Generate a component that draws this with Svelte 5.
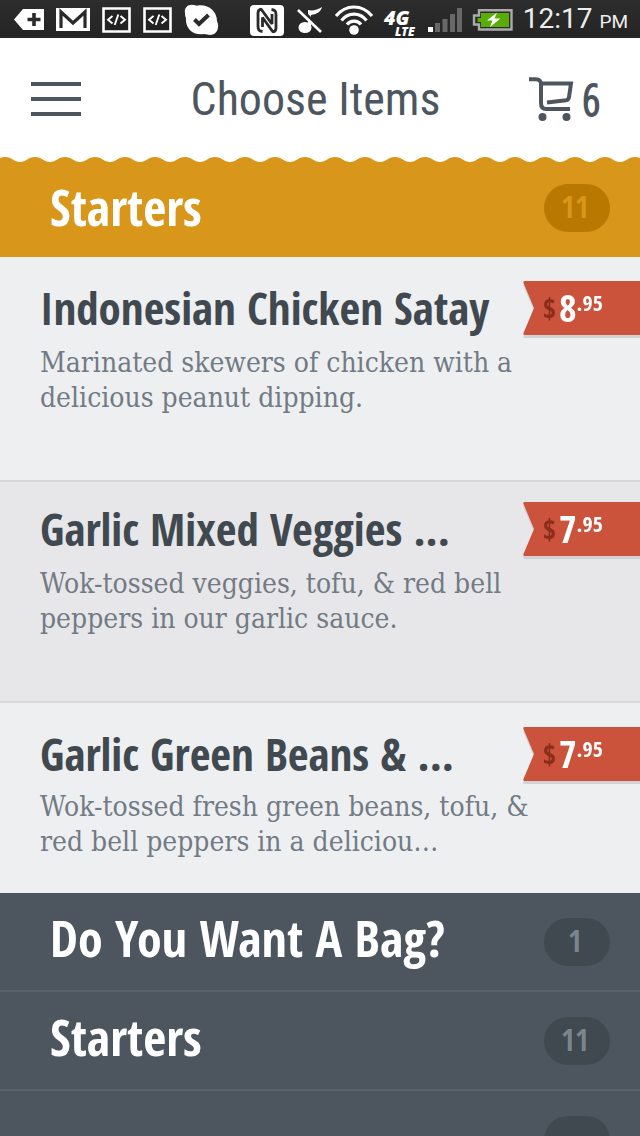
<script>
  const items = [
    { name: 'Indonesian Chicken Satay', text: 'Marinated skewers of chicken with a delicious peanut dipping.', whole: 8, cents: 95 },
    { name: 'Garlic Mixed Veggies ...', text: 'Wok-tossed veggies, tofu, & red bell peppers in our garlic sauce.', whole: 7, cents: 95 },
    { name: 'Garlic Green Beans & ...', text: 'Wok-tossed fresh green beans, tofu, & red bell peppers in a deliciou…', whole: 7, cents: 95 }
  ];
  const sections = [
    { name: 'Do You Want A Bag?', count: 1 },
    { name: 'Starters', count: 11 },
    { name: '', count: '' }
  ];
</script>

<div class="screen">
  <div class="status">
    <div class="group">
      <svg width="30" height="22" viewBox="0 0 30 22"><path d="M9 0H30V21H9L0 10.500Z" fill="#fff"/><path d="M20 4V17M13.500 10.500H26.500" stroke="#2b2b2b" stroke-width="3.600"/></svg>
      <svg width="34" height="24" viewBox="0 0 34 24"><path d="M0 0H34V23H0Z" fill="#fff"/><path d="M5 20V4L17 15L29 4V20" fill="none" stroke="#2b2b2b" stroke-width="3.200"/></svg>
      {#each [0, 1] as n (n)}
        <svg class="code" width="29" height="26" viewBox="0 0 29 26"><path d="M1.500 1.500H27.500V24.500H1.500Z" fill="#222" stroke="#fff" stroke-width="2.600"/><path d="M10.500 9L6 12.800L10.500 16.500M18.500 9L23 12.800L18.500 16.500M16.300 7.500L12.700 18" fill="none" stroke="#fff" stroke-width="1.900"/></svg>
      {/each}
      <svg width="35" height="32" viewBox="0 0 35 32"><path d="M1 9C0 4 4 0 9 1C11 1 12 2 14 1.500C24 0 33 7 33 17C36 23 33 31 26 31C24 31 22 30 20 30C9 32 1 24 2 14C1 12 1 11 1 9Z" fill="#fff"/><path d="M10.500 15.500L15 20L24.500 11" fill="none" stroke="#2b2b2b" stroke-width="4"/></svg>
    </div>
    <div class="group right">
      <svg width="34" height="31" viewBox="0 0 34 31"><rect width="34" height="31" rx="4" fill="#fff"/><path d="M12.500 26.500C9 26 8 25 8 21V8C8 6 9 4.500 11 4L22 19V9M21.500 4.500C25 5 26 6 26 10V23C26 25 25 26.500 23 27L12.500 12.500V22" fill="none" stroke="#2b2b2b" stroke-width="2.800" stroke-linejoin="bevel"/></svg>
      <svg width="30" height="28" viewBox="-3 0 30 28"><ellipse cx="8" cy="21.500" rx="6.500" ry="5.500" fill="#fff"/><path d="M11 4C16 5 20 4 25 1C24 5 21 8 14 9V21H11Z" fill="#fff"/><path d="M3 2L26 25" stroke="#2b2b2b" stroke-width="3"/><path d="M1 4L24 26" stroke="#fff" stroke-width="2.600"/></svg>
      <svg width="40" height="30" viewBox="0 0 40 30"><circle cx="20" cy="25" r="4.800" fill="#fff"/><path d="M2 11C12 -1 28 -1 38 11M7.500 15.500C14 7 26 7 32.500 15.500M13 19.500C16.500 15 23.500 15 27 19.500" fill="none" stroke="#fff" stroke-width="3.200"/></svg>
      <svg class="lte" width="34" height="34" viewBox="0 0 34 34" fill="#fff"><text x="0" y="22" font-size="20">4G</text><text x="11" y="33" font-size="12">LTE</text></svg>
      <svg width="34" height="24" viewBox="0 0 34 24" fill="#686868"><path d="M0 19H5V24H0Z" fill="#fff"/><path d="M7 15H12V24H7ZM14.500 11H19.500V24H14.500ZM22 6H27V24H22ZM29 0H34V24H29Z"/></svg>
      <svg width="41" height="22" viewBox="0 0 41 22"><path d="M7 1.200H39.500V20.500H7V15.500H2V6.500H7Z" fill="#2b2b2b" stroke="#aaa" stroke-width="2.400"/><path d="M9 4H37V18H9V13H5.500V9H9Z" fill="#58ad09"/><path d="M25 3.500L15 11.500H20.500L18 18L28.500 9.500H22.500Z" fill="#fff"/></svg>
      <span class="clock">12:17 <small>PM</small></span>
    </div>
  </div>

  <header>
    <button class="menu" aria-label="Menu"><span></span><span></span><span></span></button>
    <h1>Choose Items</h1>
    <button class="cart" aria-label="Cart, 6 items">
      <svg width="46" height="45" viewBox="0 0 46 45"><path d="M0 2.200H7C10 2.200 12 4 12 7V26C12 30 14 32 17 32H41M12 6.500H42L40 20C39.700 22 39 23 37 23.300L18 25.500" fill="none" stroke="#4d565f" stroke-width="4"/><circle cx="13.500" cy="40" r="4" fill="#4d565f"/><circle cx="37.500" cy="40" r="4" fill="#4d565f"/></svg>
      <span>6</span>
    </button>
  </header>

  <main>
    <section>
      <button class="bar open">
        <svg class="wave" width="100%" height="6">
          <defs>
            <pattern id="scallop" x="5" width="30" height="6" patternUnits="userSpaceOnUse">
              <path d="M0 0C7 0 9 5 15 5S23 0 30 0V6H0Z" fill="#d8971a"/>
            </pattern>
          </defs>
          <rect width="100%" height="6" fill="url(#scallop)"/>
        </svg>
        <span class="name">Starters</span><span class="pill">11</span>
      </button>
      <ul>
        {#each items as item (item.name)}
          <li>
            <h2>{item.name}</h2>
            <div class="tag">
              <svg width="12" height="54" viewBox="0 0 12 54"><path d="M12 0H2C0.500 0 0 1 0.500 2L11 27L0.500 52C0 53 0.500 54 2 54H12Z" fill="#cb533b"/></svg>
              <div class="price"><span class="cur">$</span><span class="whole">{item.whole}</span><span class="cents">.{item.cents}</span></div>
            </div>
            <p>{item.text}</p>
          </li>
        {/each}
      </ul>
    </section>
    {#each sections as s, i (i)}
      <button class="bar" aria-label={s.name || 'Next section'}>
        <span class="name">{s.name}</span><span class="pill">{s.count}</span>
      </button>
    {/each}
  </main>
</div>

<style>
  :global(body) { margin: 0; background: #4d555e; }
  .screen {
    height: 100vh;
    display: flex;
    flex-direction: column;
    overflow: hidden;
    font-family: "Open Sans Condensed", "Roboto Condensed", sans-serif;
  }
  button { border: 0; margin: 0; padding: 0; background: none; font: inherit; color: inherit; text-align: left; cursor: pointer; }
  svg { display: block; flex: none; }

  .status {
    flex: none;
    box-sizing: border-box;
    height: 38px;
    padding: 2px 12px 0 14px;
    display: flex;
    align-items: center;
    justify-content: space-between;
    background: linear-gradient(#2d2d2d, #242424);
    color: #fff;
  }
  .group { display: flex; align-items: center; gap: 12px; }
  .right { gap: 10px; }
  .lte { overflow: visible; font-family: "Open Sans", sans-serif; font-weight: 800; font-style: italic; }
  .clock { font: 28px/36px Roboto, sans-serif; color: #eee; white-space: nowrap; }
  .clock small { font-size: 19px; }

  header {
    flex: none;
    box-sizing: border-box;
    height: 119px;
    padding: 3px 40px 0 31px;
    display: grid;
    grid-template-columns: 70px 1fr 70px;
    align-items: center;
    background: #fff;
    color: #4d565f;
  }
  .menu { width: 50px; display: grid; gap: 11px; }
  .menu span { height: 4px; background: #4d565f; }
  h1 { margin: 0; text-align: center; font: 400 46px/56px "Roboto Condensed", sans-serif; white-space: nowrap; }
  .cart { display: flex; align-items: center; justify-content: flex-end; gap: 7px; }
  .cart span { font: 400 44px/45px "Open Sans Condensed Light", "Open Sans Condensed", sans-serif; -webkit-text-stroke: 2px #4d565f; }

  main { flex: 1; min-height: 0; overflow: hidden; }
  .bar {
    position: relative;
    box-sizing: border-box;
    width: 100%;
    height: 99px;
    padding: 0 30px 0 50px;
    display: flex;
    align-items: center;
    justify-content: space-between;
    background: #4d555e;
    border-bottom: 2px solid #59616a;
    color: #fff;
  }
  .name { padding-bottom: 8px; font-size: 50px; line-height: 60px; font-weight: 700; }
  .open { height: 100px; padding-top: 2px; background: #d8971a; border: 0; }
  .open .name { padding-bottom: 2px; }
  .wave { position: absolute; top: 0; left: 0; background: #fff; }
  .pill {
    box-sizing: border-box;
    width: 66px;
    height: 48px;
    padding-right: 4px;
    border-radius: 24px;
    background: #414950;
    color: #7b858e;
    font-size: 30px;
    line-height: 46px;
    font-weight: 700;
    text-align: center;
  }
  .open .pill { background: #b97800; color: #d8971a; }

  ul { list-style: none; margin: 0; padding: 0; }
  li {
    box-sizing: border-box;
    min-height: 223px;
    padding: 24px 0 0 40px;
    display: grid;
    grid-template-columns: 1fr 117px;
    align-content: start;
    row-gap: 10px;
    background: #eeeff1;
    border-bottom: 2px solid #d7d8da;
  }
  li:first-child { min-height: 225px; }
  li:nth-child(even) { min-height: 221px; background: #e7e7e9; padding-top: 20px; }
  li:last-child { min-height: 190px; border: 0; row-gap: 8px; }
  h2 { margin: 0; font: 700 45px/54px "Open Sans Condensed", sans-serif; color: #414950; white-space: nowrap; }
  p {
    grid-column: 1 / -1;
    margin: 0;
    padding-right: 100px;
    font: 28px/35px "DejaVu Serif Condensed", "DejaVu Serif", serif;
    color: #727b85;
  }
  .tag { display: flex; height: 54px; filter: drop-shadow(0 3px 0 #d0d2d4); }
  .price {
    flex: 1;
    padding-left: 8px;
    display: flex;
    align-items: flex-start;
    background: #cb533b;
    color: #fff;
    font-weight: 700;
  }
  .cur { width: 16px; font-size: 28px; line-height: 54px; color: #8a2d1d; }
  .whole { font-size: 38px; line-height: 52px; }
  .cents { font-size: 22px; line-height: 42px; }
</style>
